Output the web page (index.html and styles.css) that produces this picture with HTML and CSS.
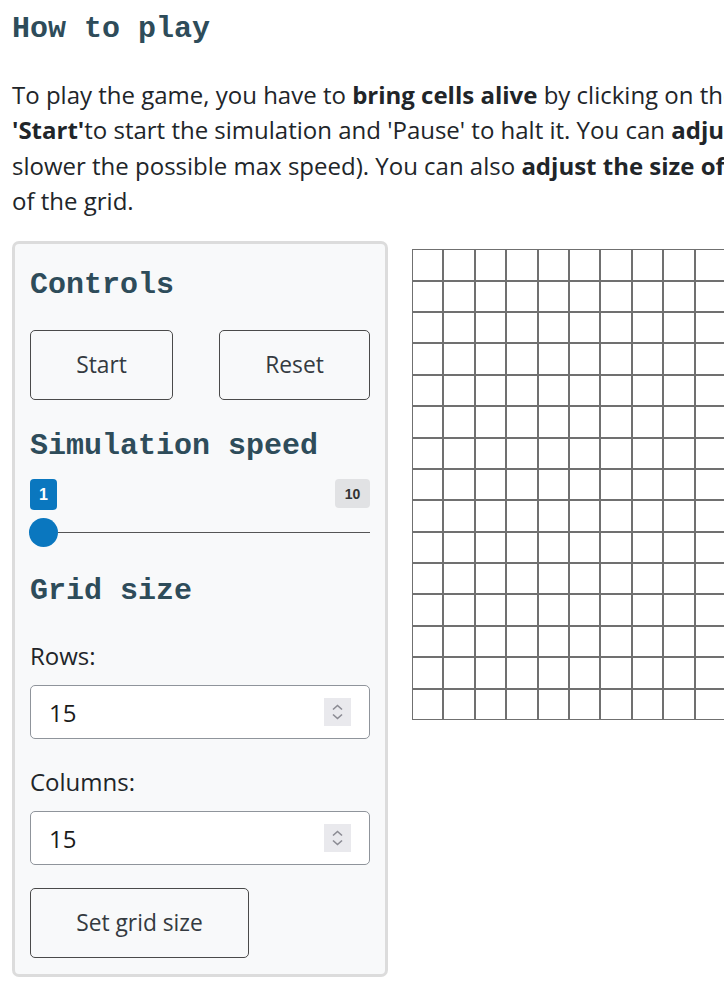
FILE: index.html
```html
<!DOCTYPE html>
<html lang="en">
<head>
<meta charset="utf-8">
<title>Game of Life</title>
<link rel="stylesheet" href="styles.css">
</head>
<body>
<main class="page">
  <h2 class="title">How to play</h2>
  <p class="intro">To play the game, you have to <b>bring cells alive</b> by clicking on the cells of the grid. Then click<br><b>'Start'</b>to start the simulation and 'Pause' to halt it. You can <b>adjust the simulation speed</b> (the lower the number the<br>slower the possible max speed). You can also <b>adjust the size of the grid</b> by changing rows and columns<br>of the grid.</p>
  <div class="game">
    <section class="panel">
      <h3 class="panel-title">Controls</h3>
      <div class="btn-row">
        <button class="btn btn-start">Start</button>
        <button class="btn btn-reset">Reset</button>
      </div>
      <h3 class="panel-title speed-title">Simulation speed</h3>
      <div class="badges">
        <span class="badge badge-value">1</span>
        <span class="badge badge-max">10</span>
      </div>
      <div class="slider">
        <span class="thumb"></span>
        <span class="track"></span>
      </div>
      <h3 class="panel-title grid-title">Grid size</h3>
      <label class="field-label">Rows:</label>
      <div class="num-input">
        <input class="num-value" type="text" value="15">
        <span class="spin"><svg width="27" height="28" viewBox="0 0 27 28"><path d="M9 11.5 L13.5 7.5 L18 11.5" fill="none" stroke="#8b8b93" stroke-width="1.6"/><path d="M9 16.5 L13.5 20.5 L18 16.5" fill="none" stroke="#8b8b93" stroke-width="1.6"/></svg></span>
      </div>
      <label class="field-label field-label-2">Columns:</label>
      <div class="num-input">
        <input class="num-value" type="text" value="15">
        <span class="spin"><svg width="27" height="28" viewBox="0 0 27 28"><path d="M9 11.5 L13.5 7.5 L18 11.5" fill="none" stroke="#8b8b93" stroke-width="1.6"/><path d="M9 16.5 L13.5 20.5 L18 16.5" fill="none" stroke="#8b8b93" stroke-width="1.6"/></svg></span>
      </div>
      <button class="btn btn-set">Set grid size</button>
    </section>
    <div class="board" id="board"></div>
  </div>
</main>
<script>
  var b = document.getElementById('board');
  for (var i = 0; i < 225; i++) { var c = document.createElement('div'); c.className = 'cell'; b.appendChild(c); }
</script>
</body>
</html>
```
FILE: styles.css
```css
html, body { margin: 0; padding: 0; background: #fff; }
body { overflow: hidden; }
.page { padding: 11px 12px 0 12px; font-family: "Open Sans", "Noto Sans", sans-serif; color: #212529; }
.title { font-family: "Liberation Mono", "Courier New", monospace; font-weight: bold; font-size: 30px; line-height: 36px; margin: 0; color: #2e4c5a; }
.intro { font-size: 24px; line-height: 35.3px; margin: 30px 0 23px 0; white-space: nowrap; }
.intro b { font-weight: 700; }
.game { display: flex; align-items: flex-start; gap: 24px; }
.panel { width: 340px; flex: none; background: #f8f9fa; border: 3px solid #dcdcdc; border-radius: 7px; padding: 23px 15px 16px 15px; }
.panel-title { font-family: "Liberation Mono", "Courier New", monospace; font-weight: bold; font-size: 30px; line-height: 36px; margin: 0; color: #2e4c5a; }
.btn-row { display: flex; justify-content: space-between; margin-top: 27px; }
.btn { font-family: "Open Sans", "Noto Sans", sans-serif; font-size: 22.75px; color: #343a40; background: transparent; border: 1px solid #4a4a4a; border-radius: 5px; height: 70px; padding: 0; line-height: 30px; }
.btn-start { width: 143px; }
.btn-reset { width: 151px; }
.speed-title { margin-top: 28px; }
.badges { display: flex; justify-content: space-between; align-items: flex-start; margin-top: 15px; }
.badge { font-family: "Liberation Sans", Arial, sans-serif; font-weight: bold; border-radius: 4px; display: flex; align-items: center; justify-content: center; }
.badge-value { width: 27px; height: 31px; background: #0a77bf; color: #fff; font-size: 16px; }
.badge-max { width: 35px; height: 29px; background: #e1e2e4; color: #333; font-size: 14px; }
.slider { display: flex; align-items: center; margin-top: 8px; height: 29px; }
.thumb { width: 29px; height: 29px; border-radius: 50%; background: #0a77bf; flex: none; margin-left: -1px; }
.track { flex: 1; height: 1px; background: #555; }
.grid-title { margin-top: 26px; }
.field-label { display: block; font-size: 24px; line-height: 35px; margin-top: 29px; }
.num-input { display: flex; align-items: center; height: 54px; box-sizing: border-box; background: #fff; border: 1px solid #8f949b; border-radius: 5px; margin-top: 12px; padding: 0 18px 0 18px; }
.num-value { flex: 1; min-width: 0; border: 0; outline: none; background: transparent; font-family: "Open Sans", "Noto Sans", sans-serif; font-size: 24px; color: #1a1a1a; padding: 0; }
.spin { width: 27px; height: 28px; background: #e9e9ed; display: block; flex: none; }
.spin svg { display: block; }
.field-label-2 { margin-top: 25px; }
.btn-set { margin-top: 23px; width: 219px; display: block; }
.board { flex: none; display: grid; grid-template-columns: repeat(15, 31.4px); grid-auto-rows: 31.4px; margin-top: 8px; }
.cell { border: 1px solid #707070; box-sizing: border-box; background: #fff; }
```
